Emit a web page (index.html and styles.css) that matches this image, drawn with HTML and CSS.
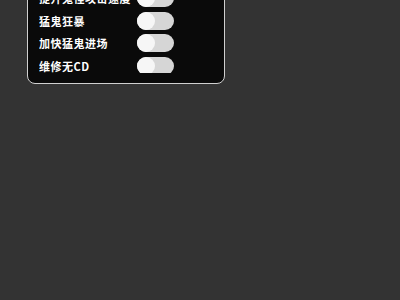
FILE: index.html
```html
<!DOCTYPE html>
<html lang="zh-CN">
<head>
  <meta charset="UTF-8">
  <meta name="viewport" content="width=device-width, initial-scale=1.0">
  <title>设置</title>
  <link rel="stylesheet" href="styles.css">
</head>
<body>
  <div class="panel">
    <div class="panel__list">
      <div class="option">
        <span class="option__label">提升鬼怪攻击速度</span>
        <span class="switch"><span class="switch__knob"></span></span>
      </div>
      <div class="option">
        <span class="option__label">猛鬼狂暴</span>
        <span class="switch"><span class="switch__knob"></span></span>
      </div>
      <div class="option">
        <span class="option__label">加快猛鬼进场</span>
        <span class="switch"><span class="switch__knob"></span></span>
      </div>
      <div class="option">
        <span class="option__label">维修无CD</span>
        <span class="switch"><span class="switch__knob"></span></span>
      </div>
    </div>
  </div>
</body>
</html>
```

FILE: styles.css
```css
*,
*::after,
*::before {
  padding: 0;
  margin: 0;
  box-sizing: border-box;
}

:root {
  --page-bg: #333333;
  --panel-bg: #0a0a0a;
  --panel-border: #d0d0d0;
  --track: #d6d6d6;
  --knob: #f6f6f6;
}

body {
  background-color: var(--page-bg);
  font-family: "Noto Sans CJK SC", "Noto Sans", sans-serif;
  overflow: hidden;
}

.panel {
  width: 198px;
  margin: -20px 0 0 27px;
  padding: 0 11px 10px;
  border: 1px solid var(--panel-border);
  border-radius: 8px;
  background-color: var(--panel-bg);
}

.panel__list {
  display: flex;
  flex-direction: column;
  gap: 4.5px;
  height: 92px;
  padding-top: 8px;
  overflow: hidden;
}

.option {
  display: grid;
  grid-template-columns: 98px 37px;
  align-items: center;
  height: 18px;
  flex-shrink: 0;
}

.option__label {
  color: #fff;
  font-size: 11px;
  font-weight: 700;
  letter-spacing: 0.5px;
  line-height: 18px;
  white-space: nowrap;
}

.switch {
  display: flex;
  width: 37px;
  height: 18px;
  border-radius: 9px;
  background-color: var(--track);
}

.switch__knob {
  width: 18px;
  height: 18px;
  border-radius: 50%;
  background-color: var(--knob);
}
```
